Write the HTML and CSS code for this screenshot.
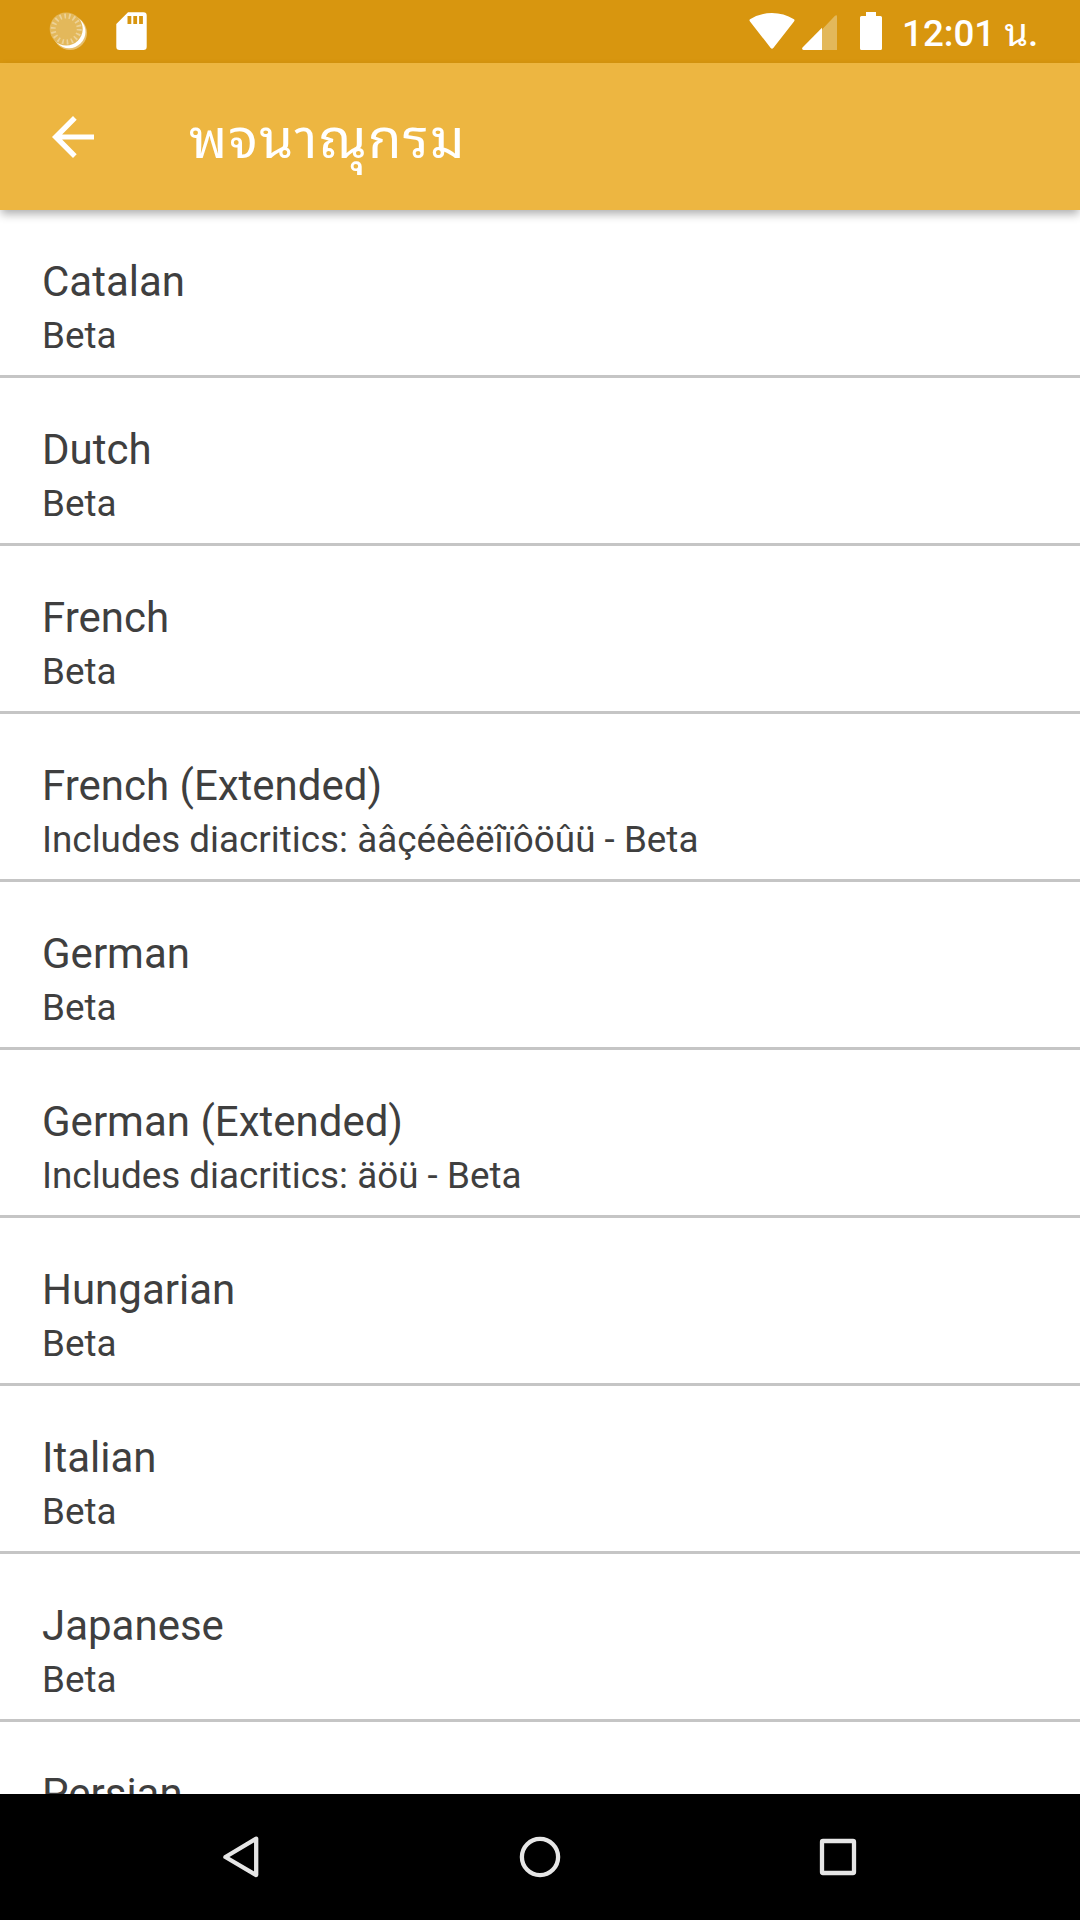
FILE: index.html
```html
<!DOCTYPE html>
<html lang="th">
<head>
<meta charset="utf-8">
<title>พจนาณุกรม</title>
<link rel="stylesheet" href="styles.css">
</head>
<body>
<div class="screen">
  <div class="status-bar">
    <svg class="icon-coin" width="40" height="40" viewBox="0 0 40 40">
      <circle cx="21" cy="21" r="17" fill="#fff" opacity=".4"/>
      <circle cx="20" cy="19.700" r="16.500" fill="#fff"/>
      <circle cx="17.200" cy="17" r="16.500" fill="#e3b85b"/>
      <circle class="coin-ridges" cx="17.200" cy="17" r="13"/>
    </svg>
    <svg class="icon-sd" width="31" height="38" viewBox="0 0 31 38">
      <path fill="#fff" fill-rule="evenodd" d="M12 0.300H27.500A3.200 3.200 0 0 1 30.700 3.500V34.800A3.200 3.200 0 0 1 27.500 38H3.500A3.200 3.200 0 0 1 .3 34.800V12ZM11.500 4V12H15.300V4ZM17.300 4V12H21.100V4ZM23.100 4V12H26.900V4Z"/>
    </svg>
    <div class="status-right">
      <svg class="icon-wifi" width="46" height="38" viewBox="0 0 46 38">
        <path fill="#fff" d="M1 9.500Q-.3 8 1.500 7Q11 1 23 1T44.500 7Q46.300 8 45 9.500L24.300 36Q23 37.600 21.700 36Z"/>
      </svg>
      <svg class="icon-signal" width="35" height="35" viewBox="0 0 35 35">
        <path fill="#e3b85b" d="M20 14.500L33 .7Q35 -.5 35 1.500V35H20Z"/>
        <path fill="#fff" d="M20 12.800V35H1.500Q-.7 34.800 .5 32.500Z"/>
      </svg>
      <svg class="icon-battery" width="22" height="38" viewBox="0 0 22 38">
        <path fill="#fff" d="M6 0H16V4H20.500Q22 4 22 5.500V36.500Q22 38 20.500 38H1.500Q0 38 0 36.500V5.500Q0 4 1.500 4H6Z"/>
      </svg>
      <span class="clock">12:01 <span class="clock-suffix">น</span>.</span>
    </div>
  </div>

  <header class="app-bar">
    <svg class="icon-back" width="42" height="42" viewBox="0 0 42 42">
      <path fill="#fff" d="M42 18.400V23.600H10.100L24.700 38.300L21 42L0 21L21 0L24.700 3.700L10.100 18.400Z"/>
    </svg>
    <h1 class="title">พจนาณุกรม</h1>
  </header>

  <ul class="list">
    <li class="row"><span class="name">Catalan</span><span class="note">Beta</span></li>
    <li class="row"><span class="name">Dutch</span><span class="note">Beta</span></li>
    <li class="row"><span class="name">French</span><span class="note">Beta</span></li>
    <li class="row"><span class="name">French (Extended)</span><span class="note">Includes diacritics: àâçéèêëîïôöûü - Beta</span></li>
    <li class="row"><span class="name">German</span><span class="note">Beta</span></li>
    <li class="row"><span class="name">German (Extended)</span><span class="note">Includes diacritics: äöü - Beta</span></li>
    <li class="row"><span class="name">Hungarian</span><span class="note">Beta</span></li>
    <li class="row"><span class="name">Italian</span><span class="note">Beta</span></li>
    <li class="row"><span class="name">Japanese</span><span class="note">Beta</span></li>
    <li class="row"><span class="name">Persian</span></li>
  </ul>

  <nav class="nav-bar">
    <svg width="48" height="48" viewBox="0 0 48 48"><path class="nav-shape" d="M38.200 5.700V42.100L7.400 24Z"/></svg>
    <svg width="48" height="48" viewBox="0 0 48 48"><circle class="nav-shape" cx="24" cy="24" r="18.100"/></svg>
    <svg width="48" height="48" viewBox="0 0 48 48"><rect class="nav-shape" x="8" y="8" width="32" height="32" rx="1"/></svg>
  </nav>
</div>
</body>
</html>
```
FILE: styles.css
```css
* {
  box-sizing: border-box;
}

body {
  margin: 0;
  font-family: Roboto, "Noto Sans", sans-serif;
  color: #3f3f3f;
}

svg {
  display: block;
  flex: none;
}

.screen {
  display: flex;
  flex-direction: column;
  width: 1080px;
  height: 1920px;
  overflow: hidden;
  background: #fff;
}

.status-bar {
  display: flex;
  align-items: flex-start;
  flex: none;
  height: 63px;
  padding: 12px 42px 0 49px;
  background: #d8960f;
}

.coin-ridges {
  fill: none;
  stroke: #edd196;
  stroke-width: 5;
  stroke-dasharray: 1.700 2.838;
}

.icon-sd {
  margin-left: 27px;
}

.status-right {
  display: flex;
  align-items: flex-start;
  margin-left: auto;
}

.icon-signal {
  margin: 3px 0 0 7px;
}

.icon-battery {
  margin-left: 23px;
}

.clock {
  width: 136px;
  margin-left: 20px;
  font-size: 36.75px;
  font-weight: 500;
  line-height: 43px;
  white-space: nowrap;
  color: #fff;
}

.clock-suffix,
.title {
  font-family: "Noto Sans Thai Looped", "Noto Looped Thai", Loma, Waree, Garuda, Umpush, Laksaman, FreeSans, "Noto Sans Thai", sans-serif;
}

.clock-suffix {
  font-size: 38px;
  font-weight: 400;
  line-height: 0;
}

.app-bar {
  display: flex;
  align-items: center;
  flex: none;
  gap: 95px;
  height: 147px;
  padding: 0 53px 0 52px;
  background: #edb641;
  box-shadow: 0 5px 9px -1px rgba(0, 0, 0, 0.32);
  z-index: 1;
}

.title {
  margin: 0;
  padding-bottom: 5px;
  font-size: 54.5px;
  font-weight: 400;
  letter-spacing: 1.3px;
  line-height: 62px;
  white-space: nowrap;
  color: #fff;
}

.list {
  flex: 1;
  min-height: 0;
  margin: 0;
  padding: 0;
  overflow: hidden;
  list-style: none;
}

.row {
  display: flex;
  flex-direction: column;
  gap: 8px;
  height: 168px;
  padding: 47px 42px 0;
  border-bottom: 3px solid #c5c5c5;
  white-space: nowrap;
}

.name {
  font-size: 42px;
  line-height: 49px;
}

.note {
  font-size: 36.85px;
  line-height: 43px;
}

.nav-bar {
  display: flex;
  align-items: center;
  justify-content: center;
  flex: none;
  gap: 250px;
  height: 126px;
  background: #000;
}

.nav-shape {
  fill: none;
  stroke: #e6e6e6;
  stroke-width: 4.300;
  stroke-linejoin: round;
}
```
